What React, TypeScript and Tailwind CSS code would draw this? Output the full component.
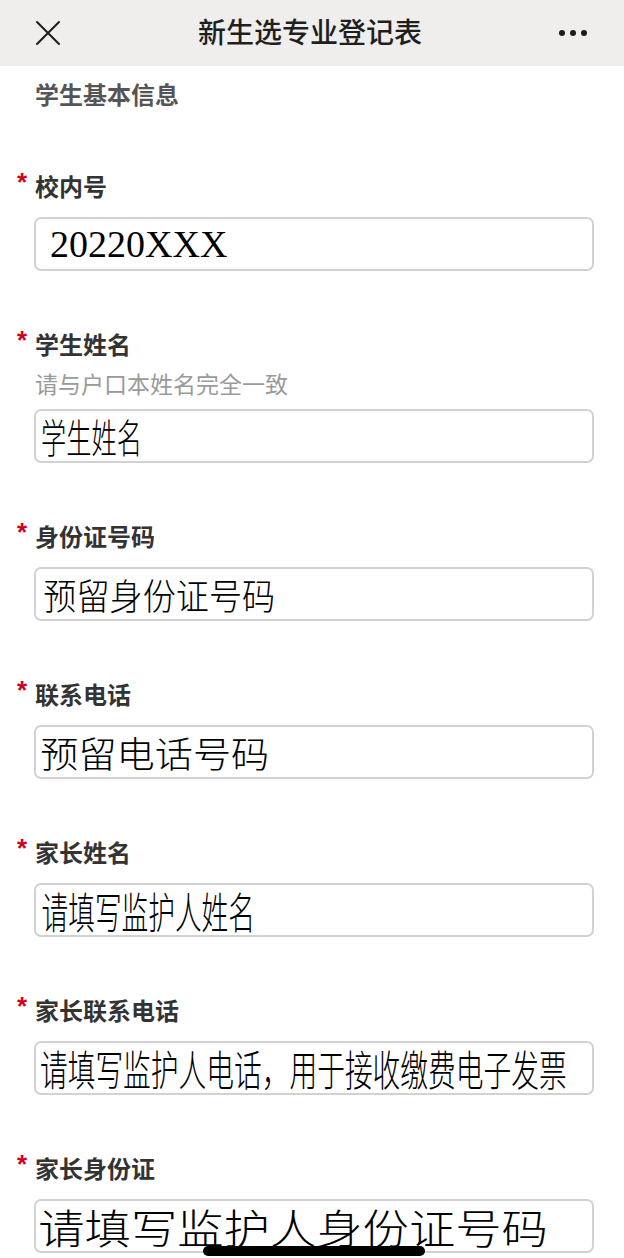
import React from "react";

type Field = {
  label: string;
  hint?: string;
  value: string;
  textClass: string;
};

const sans = "font-['Noto_Sans_CJK_SC','Noto_Sans',sans-serif]";
const cjk = "font-['Noto_Sans_CJK_SC',sans-serif] font-light";

const fields: Field[] = [
  { label: "校内号", value: "20220XXX", textClass: "pl-[14px] text-[38px] font-['Liberation_Serif',serif]" },
  { label: "学生姓名", hint: "请与户口本姓名完全一致", value: "学生姓名", textClass: `${cjk} pl-[8px] text-[40px] scale-x-[0.63]` },
  { label: "身份证号码", value: "预留身份证号码", textClass: `${cjk} pl-[8px] text-[36px] scale-x-[0.92]` },
  { label: "联系电话", value: "预留电话号码", textClass: `${cjk} pl-[4px] text-[36px] scale-x-[1.06]` },
  { label: "家长姓名", value: "请填写监护人姓名", textClass: `${cjk} pl-[9px] text-[43px] scale-x-[0.62]` },
  { label: "家长联系电话", value: "请填写监护人电话，用于接收缴费电子发票", textClass: `${cjk} pl-[6px] text-[42px] scale-x-[0.66]` },
  { label: "家长身份证", value: "请填写监护人身份证号码", textClass: `${cjk} pl-[2px] text-[41px] scale-x-[1.13]` },
];

function Header() {
  return (
    <div className="h-[66px] bg-[#efeeed] flex items-center px-[35px]">
      <svg width="26" height="26" viewBox="0 0 26 26" className="shrink-0">
        <path d="M2 2 L24 24 M24 2 L2 24" stroke="#1c1c1c" strokeWidth="2" strokeLinecap="round" />
      </svg>
      <div className={`flex-1 text-center text-[28px] font-medium text-[#1f1f1f] leading-none pb-[4px] ${sans}`}>
        新生选专业登记表
      </div>
      <div className="flex gap-[5px] items-center pr-[2px]">
        <span className="w-[6px] h-[6px] rounded-full bg-[#1c1c1c]" />
        <span className="w-[6px] h-[6px] rounded-full bg-[#1c1c1c]" />
        <span className="w-[6px] h-[6px] rounded-full bg-[#1c1c1c]" />
      </div>
    </div>
  );
}

function FormField({ field }: { field: Field }) {
  return (
    <div className="pt-[57px]">
      <div className="flex items-start pl-[17px]">
        <span className="w-[18px] h-[32px] text-[#d0021b] text-[26px] font-bold leading-[24px] font-['Liberation_Sans',sans-serif]">
          *
        </span>
        <span className={`text-[24px] leading-[32px] font-bold text-[#333333] ${sans}`}>{field.label}</span>
      </div>
      {field.hint && (
        <div className={`pl-[35px] mt-[10px] text-[23px] leading-[26px] text-[#9a9a9a] ${sans}`}>{field.hint}</div>
      )}
      <div
        className={`ml-[34px] w-[560px] h-[54px] border-2 border-[#d2d2d2] rounded-[7px] bg-white flex items-center ${
          field.hint ? "mt-[13px]" : "mt-[15px]"
        }`}
      >
        <span className={`block origin-left whitespace-nowrap leading-none text-black ${field.textClass}`}>
          {field.value}
        </span>
      </div>
    </div>
  );
}

export default function App() {
  return (
    <div className="relative w-[624px] h-[1258px] overflow-hidden bg-white">
      <Header />
      <div className={`pl-[35px] mt-[12px] h-[32px] text-[24px] leading-[32px] font-semibold text-[#555555] ${sans}`}>
        学生基本信息
      </div>
      <div className="pb-[3px]" />
      {fields.map((f) => (
        <FormField key={f.label} field={f} />
      ))}
      <div className="absolute bottom-[2px] left-[203px] w-[222px] h-[10px] rounded-full bg-black" />
    </div>
  );
}
